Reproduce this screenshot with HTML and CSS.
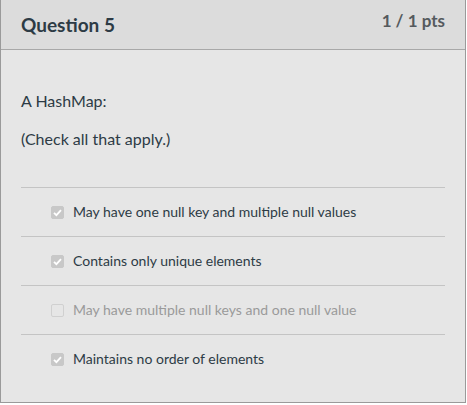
FILE: index.html
```html
<!DOCTYPE html>
<html>
<head>
<meta charset="utf-8">
<link rel="stylesheet" href="styles.css">
</head>
<body>
<div class="question">
  <div class="header">
    <h2 class="title">Question 5</h2>
    <div class="pts">1 / 1 pts</div>
  </div>
  <div class="content">
    <p class="text">A HashMap:</p>
    <p class="text">(Check all that apply.)</p>
    <div class="answers">
      <div class="answer">
        <span class="cb checked"><svg viewBox="0 0 13 13" width="13" height="13"><path d="M3 6.8 L5.4 9.2 L10 4.2" fill="none" stroke="#fff" stroke-width="1.8"/></svg></span>
        <span class="label">May have one null key and multiple null values</span>
      </div>
      <div class="answer">
        <span class="cb checked"><svg viewBox="0 0 13 13" width="13" height="13"><path d="M3 6.8 L5.4 9.2 L10 4.2" fill="none" stroke="#fff" stroke-width="1.8"/></svg></span>
        <span class="label">Contains only unique elements</span>
      </div>
      <div class="answer">
        <span class="cb"></span>
        <span class="label muted">May have multiple null keys and one null value</span>
      </div>
      <div class="answer">
        <span class="cb checked"><svg viewBox="0 0 13 13" width="13" height="13"><path d="M3 6.8 L5.4 9.2 L10 4.2" fill="none" stroke="#fff" stroke-width="1.8"/></svg></span>
        <span class="label">Maintains no order of elements</span>
      </div>
    </div>
  </div>
</div>
</body>
</html>
```
FILE: styles.css
```css
html, body {
  margin: 0;
  padding: 0;
  background: #ffffff;
}
body {
  font-family: Lato, "Open Sans", sans-serif;
}
.question {
  width: 464px;
  height: 402px;
  border: 1px solid #9a9a9a;
  border-top: none;
  background: #e6e6e6;
  box-sizing: content-box;
}
.header {
  background: #dcdcdc;
  border-bottom: 1px solid #a8a8a8;
  box-sizing: border-box;
  height: 50px;
  display: flex;
  justify-content: space-between;
  align-items: flex-start;
  padding: 0 20px 0 20px;
}
.title {
  margin: 13px 0 0 0;
  font-size: 19px;
  font-weight: 700;
  color: #2d3b45;
  line-height: 24px;
}
.pts {
  margin-top: 11px;
  font-size: 17px;
  font-weight: 700;
  color: #555a5e;
  line-height: 20px;
}
.content {
  padding: 0 20px 0 20px;
}
.text {
  margin: 0;
  font-size: 16px;
  color: #2d3b45;
  line-height: 20px;
}
.text:first-child {
  padding-top: 41px;
}
.text + .text {
  margin-top: 18px;
}
.answers {
  margin-top: 38px;
}
.answer {
  border-top: 1px solid #c4c4c4;
  height: 49px;
  box-sizing: border-box;
  display: flex;
  align-items: center;
  padding-left: 30px;
}
.cb {
  width: 13px;
  height: 13px;
  border-radius: 2px;
  box-sizing: border-box;
  border: 1px solid #d0d0d0;
  background: #e6e6e6;
  margin-right: 9px;
  display: flex;
}
.cb.checked {
  background: #c8c8c8;
  border-color: #c8c8c8;
}
.cb svg {
  display: block;
  margin: -1px;
}
.label {
  font-size: 14px;
  color: #2d3b45;
  line-height: 18px;
}
.label.muted {
  color: #9a9a9a;
}
```
